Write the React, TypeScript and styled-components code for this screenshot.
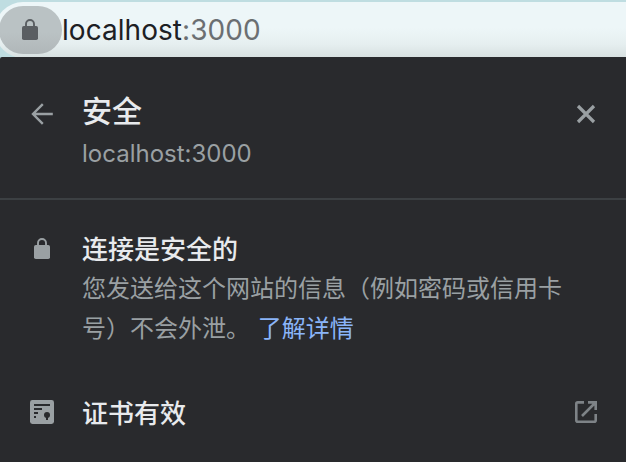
import React from 'react';
import styled, { createGlobalStyle } from 'styled-components';

const GlobalStyle = createGlobalStyle`
  * { box-sizing: border-box; }
  body { margin: 0; overflow: hidden; background: #bfdde1; }
`;

const Page = styled.div`
  width: 626px;
  height: 462px;
  display: flex;
  flex-direction: column;
  overflow: hidden;
  background: #bfdde1;
  font-family: Inter, 'Noto Sans CJK SC', sans-serif;
`;

const AddressStrip = styled.div`
  height: 57px;
  flex: none;
  padding-top: 2px;
  overflow: hidden;
`;

const AddressField = styled.div`
  display: flex;
  align-items: center;
  height: 56px;
  width: 680px;
  margin-left: -5px;
  padding-left: 4px;
  border-radius: 28px;
  background: linear-gradient(#edf6f8 0, #edf6f8 26px, #e6eff0 42px, #d8e1e1 55px);
`;

const SiteChip = styled.div`
  display: flex;
  align-items: center;
  justify-content: center;
  width: 63px;
  height: 48px;
  padding-right: 1px;
  border-radius: 24px;
  background: linear-gradient(#bac2c4 55%, #b0b7b9);
  color: #5a5e62;
`;

const Url = styled.div`
  font-size: 28px;
  line-height: 36px;
  letter-spacing: 0.05px;
  color: #1d2024;
  white-space: nowrap;
`;

const Port = styled.span`
  color: #6b6f72;
`;

const Panel = styled.main`
  flex: 1;
  background: #292a2d;
  border-top-left-radius: 2px;
  color: #e8eaed;
`;

const Row = styled.div<{ $top: number; $height: number }>`
  display: grid;
  grid-template-columns: 52px 492px 24px;
  padding: ${(p) => p.$top}px 0 0 30px;
  height: ${(p) => p.$height}px;
`;

const Header = styled(Row)`
  border-bottom: 2px solid #3c4043;
`;

const IconSlot = styled.div<{ $top?: number; $left?: number }>`
  display: flex;
  padding-top: ${(p) => p.$top ?? 0}px;
  margin-left: ${(p) => p.$left ?? 0}px;
  height: fit-content;
  color: #9aa0a3;
`;

const IconButton = styled.button<{ $top: number }>`
  display: flex;
  border: 0;
  padding: 0;
  width: 24px;
  height: 24px;
  margin-top: ${(p) => p.$top}px;
  background: none;
  color: #9aa0a3;
`;

const Title = styled.h1`
  margin: 0;
  font-size: 30px;
  line-height: 38px;
  font-weight: 500;
`;

const Origin = styled.div`
  margin-top: 7px;
  font-size: 24px;
  line-height: 34px;
  color: #9aa0a3;
`;

const RowTitle = styled.h2`
  margin: 0;
  font-size: 26px;
  line-height: 38px;
  font-weight: 500;
`;

const Description = styled.p`
  margin: 0;
  font-size: 24px;
  line-height: 40px;
  color: #9aa0a3;
  white-space: nowrap;
`;

const Link = styled.a`
  margin-left: 1px;
  color: #8ab4f8;
`;

const Lock = () => (
  <svg width="16" height="22" viewBox="0 0 16 22" fill="none">
    <path d="M4 8V5a4 4 0 0 1 8 0v3" stroke="currentColor" strokeWidth="1.9" />
    <rect y="7" width="16" height="14" rx="1.8" fill="currentColor" />
  </svg>
);

const Arrow = () => (
  <svg width="24" height="24" viewBox="0 0 24 24" fill="none" stroke="currentColor" strokeWidth="2.4">
    <path d="M22.8 12H3M12.8 2.2 3 12l9.8 9.8" />
  </svg>
);

const Close = () => (
  <svg width="24" height="24" viewBox="0 0 24 24" fill="none" stroke="currentColor" strokeWidth="3.2">
    <path d="m4 4 16 16M20 4 4 20" />
  </svg>
);

const Certificate = () => (
  <svg width="24" height="24" viewBox="0 0 24 24">
    <rect width="24" height="24" rx="2.4" fill="#9aa0a3" />
    <path d="M4 4h16v2H4zM4 8h8v2H4zM4 12h4v2H4zM4 16h2v2H4zM16 16h2v4h-2z" fill="#292a2d" />
    <circle cx="17" cy="15" r="3" fill="#292a2d" />
  </svg>
);

const External = () => (
  <svg width="24" height="24" viewBox="0 0 24 24" fill="none" stroke="#7e8387" strokeWidth="2.6">
    <path d="M10 2.4H3.8Q2.3 2.4 2.3 3.8V20.2Q2.3 21.7 3.8 21.7H20.2Q21.7 21.7 21.7 20.2V14" />
    <path d="M14 2.4h7.7V10M21 3 8 16" />
  </svg>
);

export default function App() {
  return (
    <Page>
      <GlobalStyle />
      <AddressStrip>
        <AddressField>
          <SiteChip><Lock /></SiteChip>
          <Url>localhost<Port>:3000</Port></Url>
        </AddressField>
      </AddressStrip>
      <Panel>
        <Header $top={35} $height={143}>
          <IconButton $top={10} aria-label="返回"><Arrow /></IconButton>
          <div>
            <Title>安全</Title>
            <Origin>localhost:3000</Origin>
          </div>
          <IconButton $top={10} aria-label="关闭"><Close /></IconButton>
        </Header>
        <Row $top={31} $height={162}>
          <IconSlot $top={7} $left={4}><Lock /></IconSlot>
          <div>
            <RowTitle>连接是安全的</RowTitle>
            <Description>
              您发送给这个网站的信息（例如密码或信用卡<br />
              号）不会外泄。 <Link>了解详情</Link>
            </Description>
          </div>
        </Row>
        <Row $top={33} $height={100}>
          <IconSlot $top={5}><Certificate /></IconSlot>
          <RowTitle>证书有效</RowTitle>
          <IconButton $top={5} aria-label="打开"><External /></IconButton>
        </Row>
      </Panel>
    </Page>
  );
}
